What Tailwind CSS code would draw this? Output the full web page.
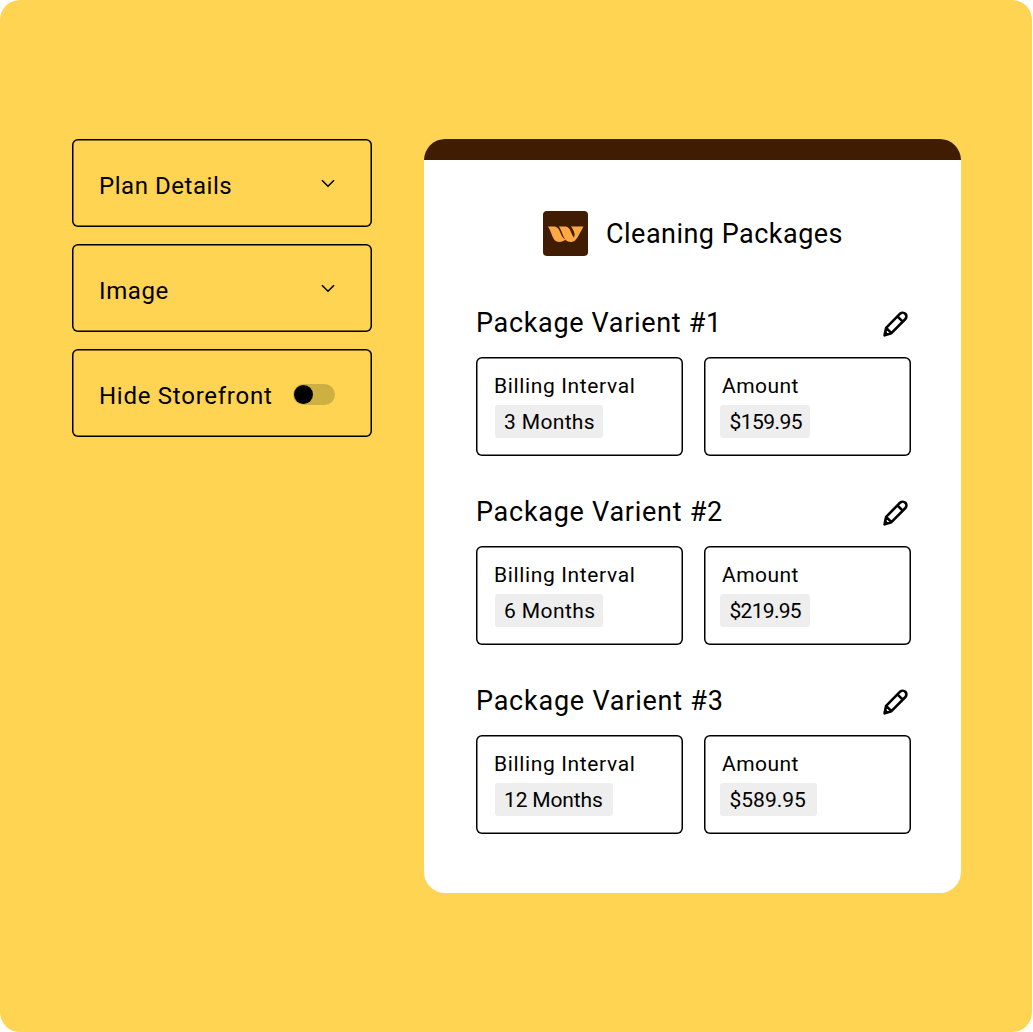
<!DOCTYPE html>
<html lang="en">
<head>
  <meta charset="utf-8">
  <title>Cleaning Packages</title>
  <meta name="viewport" content="width=device-width, initial-scale=1.0" />
  <script src="https://cdn.jsdelivr.net/npm/@tailwindcss/browser@4"></script>
</head>
<body class="bg-white font-[Roboto,sans-serif] text-black">

  <!-- Shared icons -->
  <svg class="hidden">
    <symbol id="pencil" viewBox="0 0 26 26">
      <path d="M1.6 24.3L3.1 16.8L17.1 2.7a3.75 3.75 0 0 1 5.3 5.3L8.4 22.2ZM3.1 16.8L8.4 22.2M14.4 5.4L19.7 10.7" fill="none" stroke="currentColor" stroke-width="2.6" stroke-linejoin="round" />
      <path d="M1.3 24.6L2.3 20L5.8 23.6Z" fill="currentColor" />
    </symbol>
    <symbol id="chevron" viewBox="0 0 14 9">
      <path d="M1 1.2L7 7.2L13 1.2" fill="none" stroke="currentColor" stroke-width="1.6" />
    </symbol>
  </svg>

  <main class="w-[1032px] h-[1032px] bg-[#ffd452] rounded-[20px] pt-[139px] pl-[72px] flex items-start gap-[52.4px]">

    <!-- Settings -->
    <div class="w-[300px] flex flex-col gap-[17px] text-2xl">
      <div class="h-[88px] rounded-md shadow-[inset_0_0_0_1.5px_#000] pl-[27px] pr-[37px] pt-1.5 flex items-center justify-between">
        <span class="tracking-[0.55px]">Plan Details</span>
        <svg class="w-3.5 h-[9px] mb-1.5"><use href="#chevron" /></svg>
      </div>
      <div class="h-[88px] rounded-md shadow-[inset_0_0_0_1.5px_#000] pl-[27px] pr-[37px] pt-1.5 flex items-center justify-between">
        <span class="tracking-[0.6px]">Image</span>
        <svg class="w-3.5 h-[9px] mb-1.5"><use href="#chevron" /></svg>
      </div>
      <div class="h-[88px] rounded-md shadow-[inset_0_0_0_1.5px_#000] pl-[27px] pr-[37px] pt-1.5 flex items-center justify-between">
        <span class="tracking-[0.74px]">Hide Storefront</span>
        <div class="w-[42px] h-[21px] mb-[3px] rounded-full bg-[#ceb042] flex items-center pl-px">
          <div class="size-[19px] rounded-full bg-black"></div>
        </div>
      </div>
    </div>

    <!-- Package card -->
    <div class="w-[537px] h-[753.5px] rounded-[21px] bg-white overflow-hidden">
      <div class="h-[21px] bg-[#401c02]"></div>

      <div class="mt-[51px] flex items-center gap-[18px] pl-[118.6px]">
        <svg class="size-[45px] shrink-0" viewBox="0 0 45 45">
          <rect width="45" height="45" rx="4" fill="#401c02" />
          <g fill="#ffa944">
            <path d="M4.8 15.5H10.5C14.5 15.5 15.8 18 17.3 21.5C18.8 25.2 20 27.6 22.6 28.6C21 30.2 19 31 16.3 31C11.5 31 10 27 8.6 23.3C7.4 20 6.5 17.5 4.8 15.5Z" />
            <path d="M15.7 15.5H21.5C25.5 15.5 26.8 18 28.2 21.5C29 23.6 29.8 25.2 30.8 26.4C31.6 25 31.8 23.6 31.4 22.2C30.6 19.5 29.5 17 27.8 15.5H40.5L35.3 25C33.2 28.9 31.3 31 27.6 31C22.6 31 21 27 19.6 23.3C18.4 20 17.4 17.5 15.7 15.5Z" />
          </g>
        </svg>
        <h1 class="text-[27px] tracking-[0.48px] whitespace-nowrap pt-px">Cleaning Packages</h1>
      </div>

      <div class="mt-[46px] pl-[51.6px] w-[486.6px] flex flex-col gap-9">

        <section class="h-[153px]">
          <div class="h-[55px] flex items-start justify-between">
            <h2 class="text-[27px] leading-[43px] tracking-[0.67px]">Package Varient #1</h2>
            <svg class="size-[26px] mt-[9px] mr-0.5"><use href="#pencil" /></svg>
          </div>
          <div class="grid grid-cols-2 gap-[21px] text-[21px]">
            <div class="h-[99px] rounded-md shadow-[inset_0_0_0_1.5px_#000] pt-[14px] pl-[18px]">
              <div class="leading-[31px] tracking-[0.64px]">Billing Interval</div>
              <span class="mt-[3px] ml-px block w-[108px] h-[33px] pl-[9px] rounded-[3px] bg-[#eee] leading-[34px] tracking-[0.35px] whitespace-nowrap">3 Months</span>
            </div>
            <div class="h-[99px] rounded-md shadow-[inset_0_0_0_1.5px_#000] pt-[14px] pl-[18px]">
              <div class="leading-[31px] tracking-[0.45px]">Amount</div>
              <span class="mt-[3px] -ml-[1.5px] block w-[90px] h-[33px] pl-[9px] rounded-[3px] bg-[#eee] leading-[34px] tracking-[-0.55px]">$159.95</span>
            </div>
          </div>
        </section>

        <section class="h-[153px]">
          <div class="h-[55px] flex items-start justify-between">
            <h2 class="text-[27px] leading-[43px] tracking-[0.73px]">Package Varient #2</h2>
            <svg class="size-[26px] mt-[9px] mr-0.5"><use href="#pencil" /></svg>
          </div>
          <div class="grid grid-cols-2 gap-[21px] text-[21px]">
            <div class="h-[99px] rounded-md shadow-[inset_0_0_0_1.5px_#000] pt-[14px] pl-[18px]">
              <div class="leading-[31px] tracking-[0.64px]">Billing Interval</div>
              <span class="mt-[3px] ml-px block w-[108px] h-[33px] pl-[9px] rounded-[3px] bg-[#eee] leading-[34px] tracking-[0.42px] whitespace-nowrap">6 Months</span>
            </div>
            <div class="h-[99px] rounded-md shadow-[inset_0_0_0_1.5px_#000] pt-[14px] pl-[18px]">
              <div class="leading-[31px] tracking-[0.45px]">Amount</div>
              <span class="mt-[3px] -ml-[1.5px] block w-[90px] h-[33px] pl-[9px] rounded-[3px] bg-[#eee] leading-[34px] tracking-[-0.7px]">$219.95</span>
            </div>
          </div>
        </section>

        <section class="h-[153px]">
          <div class="h-[55px] flex items-start justify-between">
            <h2 class="text-[27px] leading-[43px] tracking-[0.77px]">Package Varient #3</h2>
            <svg class="size-[26px] mt-[9px] mr-0.5"><use href="#pencil" /></svg>
          </div>
          <div class="grid grid-cols-2 gap-[21px] text-[21px]">
            <div class="h-[99px] rounded-md shadow-[inset_0_0_0_1.5px_#000] pt-[14px] pl-[18px]">
              <div class="leading-[31px] tracking-[0.64px]">Billing Interval</div>
              <span class="mt-[3px] ml-px block w-[118px] h-[33px] pl-[9px] rounded-[3px] bg-[#eee] leading-[34px] tracking-[-0.15px] whitespace-nowrap">12 Months</span>
            </div>
            <div class="h-[99px] rounded-md shadow-[inset_0_0_0_1.5px_#000] pt-[14px] pl-[18px]">
              <div class="leading-[31px] tracking-[0.45px]">Amount</div>
              <span class="mt-[3px] -ml-[1.5px] block w-[97px] h-[33px] pl-[9px] rounded-[3px] bg-[#eee] leading-[34px]">$589.95</span>
            </div>
          </div>
        </section>

      </div>
    </div>
  </main>
</body>
</html>
